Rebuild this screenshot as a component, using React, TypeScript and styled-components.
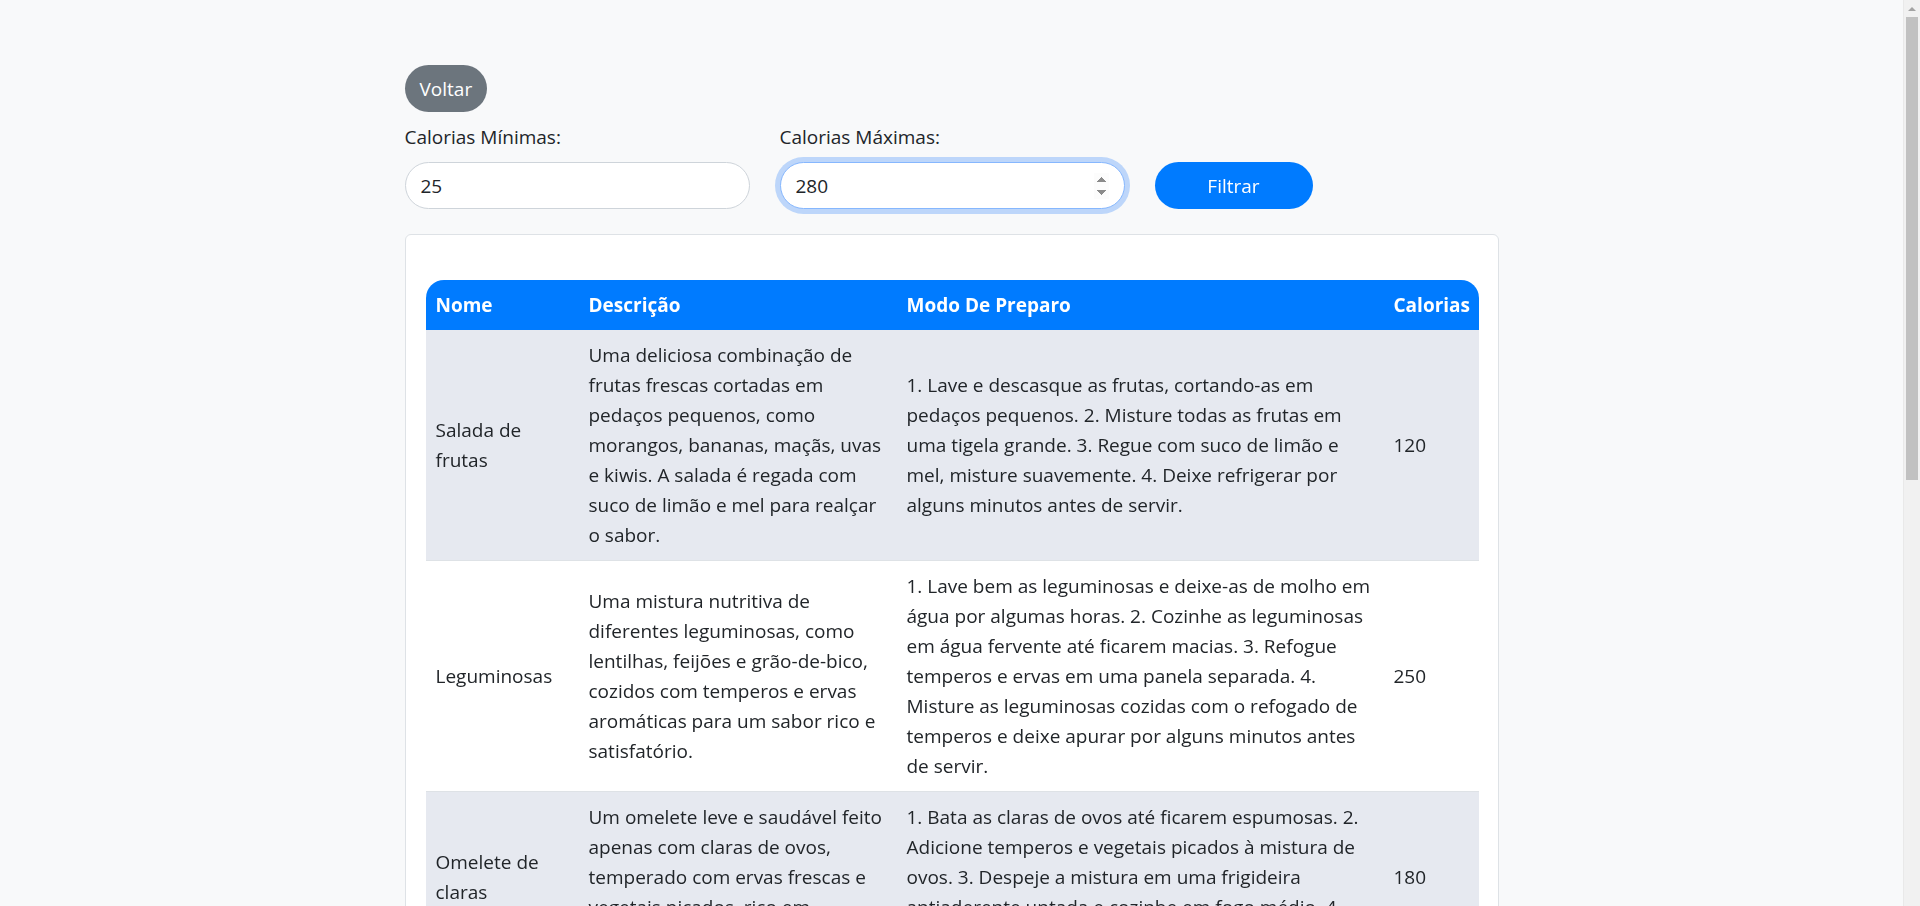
import React from "react";
import styled, { createGlobalStyle } from "styled-components";

interface IReceita {
  nome: string;
  descricao: string;
  modo: string;
  calorias: number;
}

const receitas: IReceita[] = [
  {
    nome: "Salada de frutas",
    descricao:
      "Uma deliciosa combinação de frutas frescas cortadas em pedaços pequenos, como morangos, bananas, maçãs, uvas e kiwis. A salada é regada com suco de limão e mel para realçar o sabor.",
    modo: "1. Lave e descasque as frutas, cortando-as em pedaços pequenos. 2. Misture todas as frutas em uma tigela grande. 3. Regue com suco de limão e mel, misture suavemente. 4. Deixe refrigerar por alguns minutos antes de servir.",
    calorias: 120,
  },
  {
    nome: "Leguminosas",
    descricao:
      "Uma mistura nutritiva de diferentes leguminosas, como lentilhas, feijões e grão-de-bico, cozidos com temperos e ervas aromáticas para um sabor rico e satisfatório.",
    modo: "1. Lave bem as leguminosas e deixe-as de molho em água por algumas horas. 2. Cozinhe as leguminosas em água fervente até ficarem macias. 3. Refogue temperos e ervas em uma panela separada. 4. Misture as leguminosas cozidas com o refogado de temperos e deixe apurar por alguns minutos antes de servir.",
    calorias: 250,
  },
  {
    nome: "Omelete de claras",
    descricao:
      "Um omelete leve e saudável feito apenas com claras de ovos, temperado com ervas frescas e vegetais picados, rico em proteínas.",
    modo: "1. Bata as claras de ovos até ficarem espumosas. 2. Adicione temperos e vegetais picados à mistura de ovos. 3. Despeje a mistura em uma frigideira antiaderente untada e cozinhe em fogo médio. 4. Dobre ao meio e sirva.",
    calorias: 180,
  },
  {
    nome: "Frango grelhado",
    descricao:
      "Peito de frango temperado com alho, limão e ervas, grelhado até ficar dourado e suculento, acompanhado de legumes no vapor.",
    modo: "1. Tempere o frango com alho, limão, sal e ervas. 2. Deixe marinar por 30 minutos. 3. Grelhe em fogo médio dos dois lados até dourar. 4. Sirva com legumes cozidos no vapor.",
    calorias: 220,
  },
  {
    nome: "Sopa de legumes",
    descricao:
      "Uma sopa leve e reconfortante preparada com cenoura, abobrinha, chuchu e batata, temperada com salsinha e cebolinha.",
    modo: "1. Pique todos os legumes em cubos. 2. Refogue a cebola e o alho em um fio de azeite. 3. Acrescente os legumes e cubra com água. 4. Cozinhe até ficarem macios e finalize com cheiro-verde.",
    calorias: 150,
  },
  {
    nome: "Salmão assado",
    descricao:
      "Filé de salmão assado com ervas finas e rodelas de limão, fonte de ômega-3 e proteínas de alta qualidade.",
    modo: "1. Tempere o salmão com sal, pimenta e ervas. 2. Coloque em uma assadeira com rodelas de limão. 3. Asse em forno preaquecido a 200 graus por cerca de 20 minutos. 4. Sirva em seguida.",
    calorias: 280,
  },
  {
    nome: "Iogurte com aveia",
    descricao:
      "Iogurte natural desnatado servido com aveia em flocos, sementes de chia e pedaços de frutas vermelhas.",
    modo: "1. Coloque o iogurte em uma tigela. 2. Acrescente a aveia e as sementes de chia. 3. Finalize com as frutas vermelhas picadas e sirva gelado.",
    calorias: 160,
  },
];

const GlobalStyle = createGlobalStyle`
  body {
    margin: 0;
    background: #f8f9fa;
    color: #212529;
    font-family: "Open Sans", "Noto Sans", sans-serif;
    font-size: 19px;
    line-height: 30px;
  }
  * {
    box-sizing: border-box;
  }
`;

// the page keeps room for the browser scrollbar drawn on the right
const Page = styled.div`
  padding-right: 17px;
`;

const ScrollTrack = styled.div`
  position: fixed;
  top: 0;
  right: 0;
  width: 17px;
  height: 100vh;
  background: #f1f1f1;
  border-left: 1px solid #e9e9e9;
`;

const ScrollArrow = styled.div`
  height: 17px;
  display: flex;
  align-items: center;
  justify-content: center;
  &::before {
    content: "";
    border-left: 4px solid transparent;
    border-right: 4px solid transparent;
    border-bottom: 4px solid #a3a3a3;
  }
`;

const ScrollThumb = styled.div`
  margin: 0 2px;
  height: 463px;
  background: #c1c1c1;
`;

const Container = styled.div`
  width: 1094px;
  margin: 0 auto;
  padding: 65px 0 40px;
`;

const PillButton = styled.button<{ $variant: "secondary" | "primary"; $width?: number }>`
  display: inline-block;
  height: 47px;
  padding: 0 15px;
  width: ${(p) => (p.$width ? `${p.$width}px` : "auto")};
  border: none;
  border-radius: 999px;
  background: ${(p) => (p.$variant === "primary" ? "#007bff" : "#6c757d")};
  color: #fff;
  font-family: inherit;
  font-size: 19px;
  line-height: 30px;
  cursor: pointer;
`;

const BackRow = styled.div`
  margin-bottom: 10px;
`;

const FilterBar = styled.form`
  display: flex;
  align-items: flex-end;
  gap: 30px;
`;

const Field = styled.div`
  display: flex;
  flex-direction: column;
  width: 345px;
`;

const Label = styled.label`
  margin-bottom: 10px;
`;

const Input = styled.input<{ $focused?: boolean }>`
  height: 47px;
  padding: 0 15px;
  border: 1px solid ${(p) => (p.$focused ? "#86b7fe" : "#ced4da")};
  border-radius: 999px;
  background: #fff;
  color: #212529;
  font-family: inherit;
  font-size: 19px;
  outline: none;
  box-shadow: ${(p) => (p.$focused ? "0 0 0 5px rgba(13, 110, 253, 0.25)" : "none")};
`;

const Card = styled.div`
  margin-top: 25px;
  padding: 45px 20px 20px;
  background: #fff;
  border: 1px solid #dee2e6;
  border-radius: 6px;
`;

const Table = styled.table`
  width: 100%;
  border-collapse: separate;
  border-spacing: 0;
  table-layout: fixed;
`;

const HeadCell = styled.th<{ $width: number; $first?: boolean; $last?: boolean }>`
  width: ${(p) => p.$width}px;
  padding: 10px;
  background: #007bff;
  color: #fff;
  font-weight: 700;
  text-align: left;
  border-top-left-radius: ${(p) => (p.$first ? "18px" : "0")};
  border-top-right-radius: ${(p) => (p.$last ? "18px" : "0")};
`;

const Row = styled.tr<{ $striped: boolean }>`
  background: ${(p) => (p.$striped ? "#e6e9f0" : "#fff")};
`;

const Cell = styled.td<{ $padRight?: number }>`
  padding: 10px ${(p) => p.$padRight ?? 10}px 10px 10px;
  vertical-align: middle;
  border-bottom: 1px solid #dee2e6;
`;

const columns = [
  { title: "Nome", width: 153 },
  { title: "Descrição", width: 318 },
  { title: "Modo De Preparo", width: 487 },
  { title: "Calorias", width: 95 },
];

export default function App() {
  return (
    <Page>
      <GlobalStyle />
      <Container>
        <BackRow>
          <PillButton $variant="secondary" type="button">
            Voltar
          </PillButton>
        </BackRow>
        <FilterBar onSubmit={(e) => e.preventDefault()}>
          <Field>
            <Label htmlFor="min">Calorias Mínimas:</Label>
            <Input id="min" type="number" defaultValue={25} />
          </Field>
          <Field>
            <Label htmlFor="max">Calorias Máximas:</Label>
            <Input id="max" type="number" defaultValue={280} $focused autoFocus />
          </Field>
          <PillButton $variant="primary" $width={158} type="submit">
            Filtrar
          </PillButton>
        </FilterBar>
        <Card>
          <Table>
            <thead>
              <tr>
                {columns.map((c, i) => (
                  <HeadCell
                    key={c.title}
                    $width={c.width}
                    $first={i === 0}
                    $last={i === columns.length - 1}
                  >
                    {c.title}
                  </HeadCell>
                ))}
              </tr>
            </thead>
            <tbody>
              {receitas.map((r, i) => (
                <Row key={r.nome} $striped={i % 2 === 0}>
                  <Cell>{r.nome}</Cell>
                  <Cell $padRight={14}>{r.descricao}</Cell>
                  <Cell $padRight={13}>{r.modo}</Cell>
                  <Cell>{r.calorias}</Cell>
                </Row>
              ))}
            </tbody>
          </Table>
        </Card>
      </Container>
      <ScrollTrack>
        <ScrollArrow />
        <ScrollThumb />
      </ScrollTrack>
    </Page>
  );
}
